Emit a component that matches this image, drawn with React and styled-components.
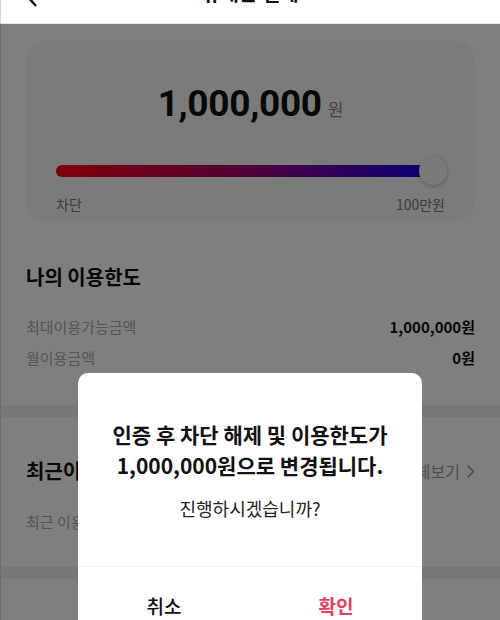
import React from "react";
import styled, { createGlobalStyle } from "styled-components";

const Global = createGlobalStyle`
  html, body { margin: 0; padding: 0; background: #fff; }
  body { font-family: "Noto Sans CJK KR", "Noto Sans", sans-serif; color: #111; overflow: hidden; }
  * { box-sizing: border-box; }
`;

const Screen = styled.div`
  width: 500px;
  height: 620px;
  display: flex;
  flex-direction: column;
  background: #fff;
  overflow: hidden;
  border-left: 1px solid #d8d8d8;
`;

const Header = styled.header`
  height: 24px;
  flex: none;
  display: flex;
  align-items: flex-start;
  justify-content: center;
  position: relative;
  z-index: 3;
  background: #fff;
  border-bottom: 1px solid #e6e6e6;
  overflow: hidden;
`;

const BackIcon = styled.svg`
  position: absolute;
  left: 24px;
  top: -14px;
`;

const Title = styled.h1`
  margin: -20px 0 0;
  font-size: 20px;
  line-height: 26px;
  font-weight: 700;
`;

const Body = styled.main`
  flex: 1;
  display: flex;
  flex-direction: column;
  padding-top: 16px;
`;

const Card = styled.section`
  margin: 0 25px;
  height: 182px;
  border-radius: 22px;
  background: #f6f6f7;
  display: flex;
  flex-direction: column;
  align-items: center;
  padding: 42px 30px 0;
`;

const Amount = styled.div`
  display: flex;
  align-items: baseline;
  gap: 6px;
  height: 50px;
`;

const AmountNum = styled.span`
  font-family: Roboto, "Noto Sans CJK KR", sans-serif;
  font-size: 37px;
  font-weight: 700;
  letter-spacing: -0.3px;
  color: #111;
`;

const AmountUnit = styled.span`
  font-size: 17px;
  color: #888;
`;

const SliderWrap = styled.div`
  width: 100%;
  margin-top: 25px;
  position: relative;
  height: 28px;
  display: flex;
  align-items: center;
`;

const Track = styled.div`
  width: 372px;
  height: 12px;
  border-radius: 6px;
  background: linear-gradient(90deg, #ff0010, #b00060 45%, #1a00f0);
`;

const Thumb = styled.div`
  position: absolute;
  right: -2px;
  top: 0;
  width: 28px;
  height: 28px;
  border-radius: 50%;
  background: #f4f4f4;
  box-shadow: 0 1px 4px rgba(0, 0, 0, 0.25);
`;

const Scale = styled.div`
  width: 100%;
  display: flex;
  justify-content: space-between;
  margin-top: 9px;
  font-size: 14px;
  color: #777;
`;

const Section = styled.section`
  padding: ${(p) => p.$pad || "36px 25px 0"};
  display: flex;
  flex-direction: column;
`;

const SectionHead = styled.div`
  display: flex;
  justify-content: space-between;
  align-items: center;
`;

const SectionTitle = styled.h2`
  margin: 0;
  font-size: 20px;
  font-weight: 700;
  line-height: 28px;
  color: #111;
`;

const More = styled.span`
  font-size: 16px;
  color: #999;
  display: flex;
  align-items: center;
  gap: 6px;
`;

const Row = styled.div`
  display: flex;
  justify-content: space-between;
  align-items: center;
  height: 31px;
  font-size: 15px;
  &:first-of-type { margin-top: 20px; }
`;

const RowLabel = styled.span`
  color: #aaa;
`;

const RowValue = styled.span`
  font-weight: 700;
  color: #111;
`;

const Band = styled.div`
  height: 12px;
  background: #f0f0f0;
  margin-top: ${(p) => p.$mt || 0}px;
`;

const Empty = styled.p`
  margin: 26px 0 0;
  font-size: 15px;
  color: #aaa;
  line-height: 22px;
`;

const Overlay = styled.div`
  position: fixed;
  top: 24px;
  left: 0;
  right: 0;
  bottom: 0;
  background: rgba(0, 0, 0, 0.5);
  z-index: 2;
`;

const Dialog = styled.div`
  position: fixed;
  left: 78px;
  top: 373px;
  width: 344px;
  height: 290px;
  background: #fff;
  border-radius: 10px;
  z-index: 4;
  display: flex;
  flex-direction: column;
`;

const DialogBody = styled.div`
  height: 194px;
  padding-top: 46px;
  text-align: center;
  border-bottom: 1px solid #f0f0f0;
`;

const DialogTitle = styled.p`
  margin: 0;
  font-size: 21px;
  font-weight: 700;
  line-height: 31px;
  color: #111;
`;

const DialogText = styled.p`
  margin: 15px 0 0;
  font-size: 18px;
  line-height: 24px;
  color: #222;
`;

const Buttons = styled.div`
  display: grid;
  grid-template-columns: 1fr 1fr;
`;

const Btn = styled.button`
  border: 0;
  background: none;
  font-family: inherit;
  font-size: 19px;
  font-weight: ${(p) => (p.$primary ? 700 : 500)};
  color: ${(p) => (p.$primary ? "#e4405c" : "#111")};
  height: 76px;
  padding: 0;
`;

export default function App() {
  return (
    <>
      <Global />
      <Screen>
        <Header>
          <BackIcon width="14" height="22" viewBox="0 0 14 22">
            <path d="M11 2 L3 11 L11 20" fill="none" stroke="#111" strokeWidth="2.4" />
          </BackIcon>
          <Title>휴대폰 결제</Title>
        </Header>
        <Body>
          <Card>
            <Amount>
              <AmountNum>1,000,000</AmountNum>
              <AmountUnit>원</AmountUnit>
            </Amount>
            <SliderWrap>
              <Track />
              <Thumb />
            </SliderWrap>
            <Scale>
              <span>차단</span>
              <span>100만원</span>
            </Scale>
          </Card>
          <Section $pad="41px 25px 0">
            <SectionTitle>나의 이용한도</SectionTitle>
            <Row>
              <RowLabel>최대이용가능금액</RowLabel>
              <RowValue>1,000,000원</RowValue>
            </Row>
            <Row>
              <RowLabel>월이용금액</RowLabel>
              <RowValue>0원</RowValue>
            </Row>
          </Section>
          <Band $mt={32} />
          <Section $pad="40px 25px 0">
            <SectionHead>
              <SectionTitle>최근이용내역</SectionTitle>
              <More>
                전체보기
                <svg width="9" height="15" viewBox="0 0 9 15">
                  <path d="M1.5 1.5 L7.5 7.5 L1.5 13.5" fill="none" stroke="#999" strokeWidth="1.6" />
                </svg>
              </More>
            </SectionHead>
            <Empty>최근 이용내역이 없습니다.</Empty>
          </Section>
          <Band $mt={34} />
        </Body>
      </Screen>
      <Overlay />
      <Dialog>
        <DialogBody>
          <DialogTitle>인증 후 차단 해제 및 이용한도가</DialogTitle>
          <DialogTitle>1,000,000원으로 변경됩니다.</DialogTitle>
          <DialogText>진행하시겠습니까?</DialogText>
        </DialogBody>
        <Buttons>
          <Btn>취소</Btn>
          <Btn $primary>확인</Btn>
        </Buttons>
      </Dialog>
    </>
  );
}
